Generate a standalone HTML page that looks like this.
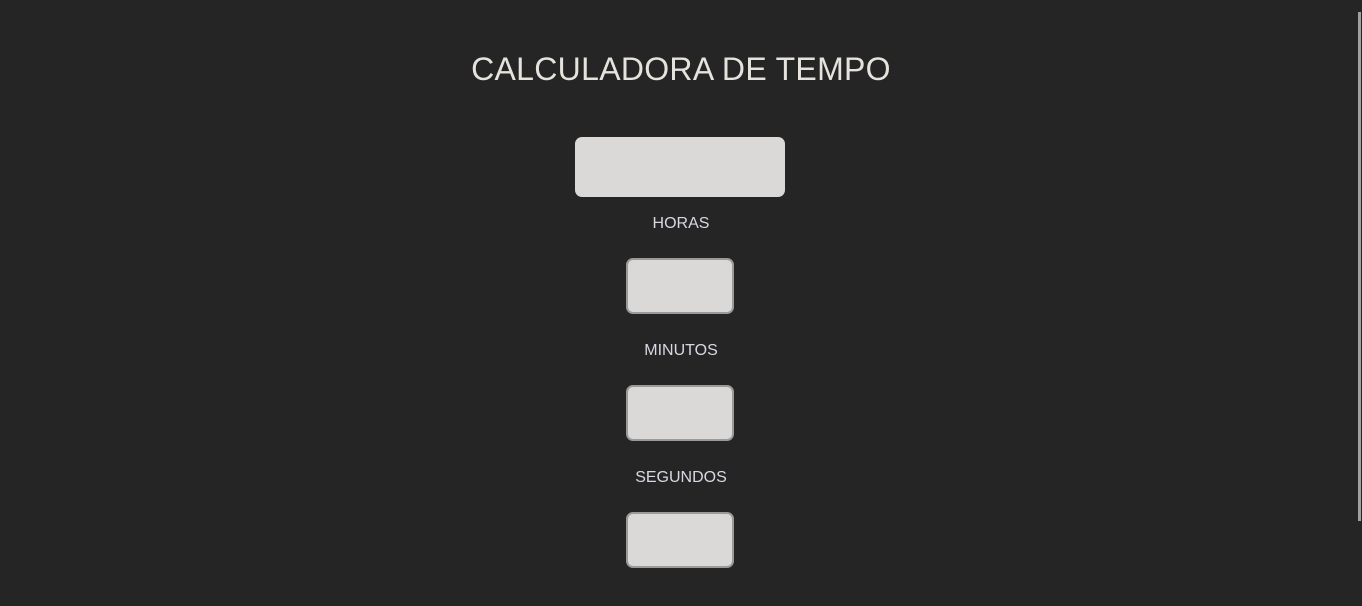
<!DOCTYPE html>
<html><head><style>
html,body{margin:0;padding:0;}
body{width:1362px;height:606px;background:#252525;position:relative;overflow:hidden;font-family:"Liberation Sans",sans-serif;}
.t{position:absolute;left:0;width:1362px;text-align:center;color:#e4e0da;}
h1{position:absolute;left:0;top:49px;width:1362px;margin:0;text-align:center;font-weight:normal;font-size:32px;letter-spacing:0.3px;color:#e6e2dc;line-height:40px;}
.lbl{font-size:16px;line-height:20px;color:#d8d8e4;}
.b{position:absolute;background:#dad9d8;border-radius:7px;box-sizing:border-box;}
.s{left:626px;width:108px;height:56px;border:2px solid #9a9a9a;}
.sb{position:absolute;left:1358px;top:12px;width:3px;height:509px;background:#a0a0a0;}
</style></head><body>
<h1>CALCULADORA DE TEMPO</h1>
<div class="b" style="left:575px;top:137px;width:210px;height:60px;"></div>
<div class="t lbl" style="top:214px">HORAS</div>
<div class="b s" style="top:258px"></div>
<div class="t lbl" style="top:341px">MINUTOS</div>
<div class="b s" style="top:385px"></div>
<div class="t lbl" style="top:468px">SEGUNDOS</div>
<div class="b s" style="top:512px"></div>
<div class="sb"></div>
</body></html>
